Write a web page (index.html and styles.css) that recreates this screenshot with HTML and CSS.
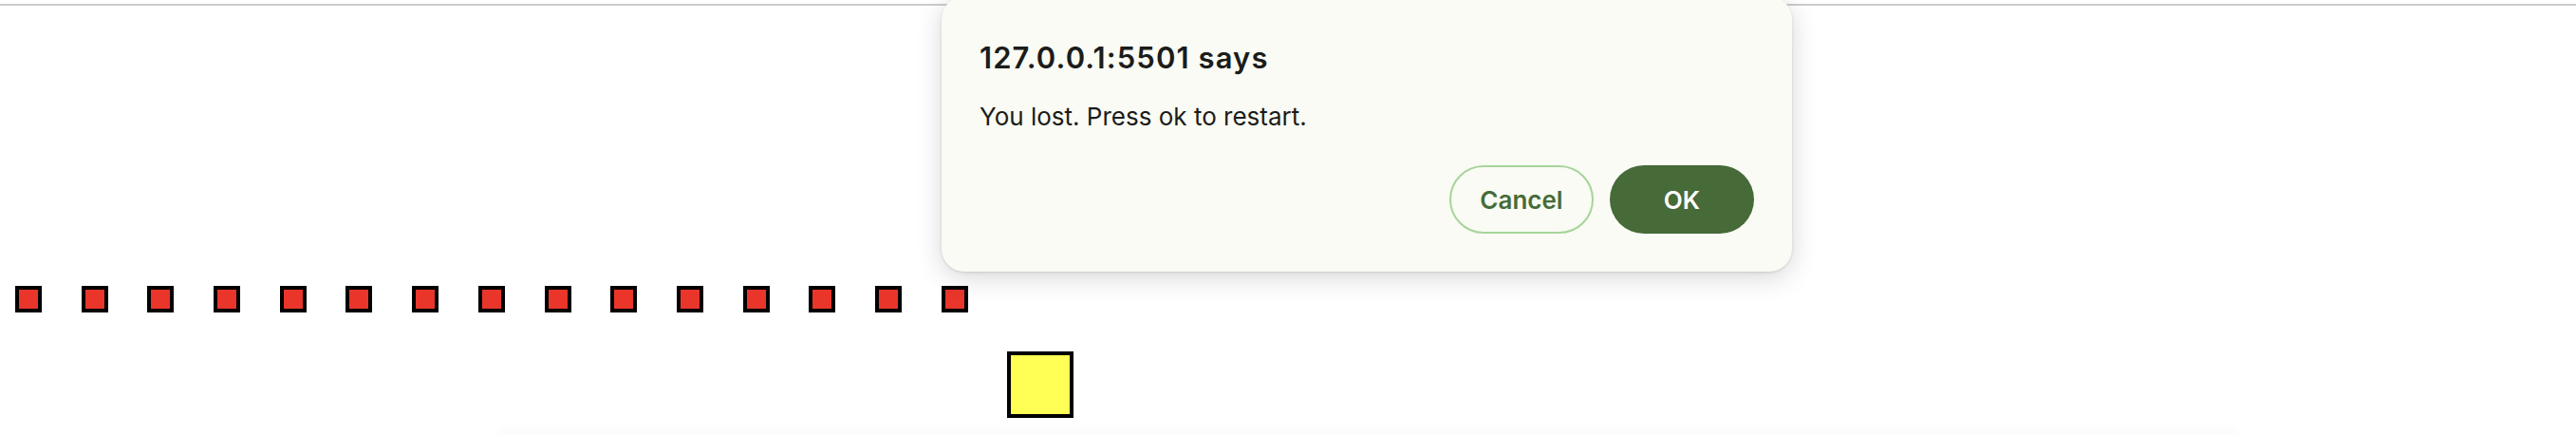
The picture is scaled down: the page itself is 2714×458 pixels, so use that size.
FILE: index.html
```html
<!DOCTYPE html>
<html>
<head>
<meta charset="utf-8">
<link rel="stylesheet" href="styles.css">
</head>
<body>
<div class="topline"></div>
<div class="board">
  <div class="snake">
    <div class="seg"></div><div class="seg"></div><div class="seg"></div><div class="seg"></div><div class="seg"></div>
    <div class="seg"></div><div class="seg"></div><div class="seg"></div><div class="seg"></div><div class="seg"></div>
    <div class="seg"></div><div class="seg"></div><div class="seg"></div><div class="seg"></div><div class="seg"></div>
  </div>
  <div class="food"></div>
</div>
<div class="bottomshade"></div>
<div class="dialog">
  <div class="title">127.0.0.1:5501 says</div>
  <div class="message">You lost. Press ok to restart.</div>
  <div class="actions">
    <button class="btn cancel">Cancel</button>
    <button class="btn ok">OK</button>
  </div>
</div>
</body>
</html>
```
FILE: styles.css
```css
html, body {
  margin: 0;
  padding: 0;
  background: #ffffff;
  width: 2714px;
  height: 458px;
  overflow: hidden;
  font-family: Inter, "Noto Sans", sans-serif;
}
.topline {
  margin-top: 4px;
  height: 2px;
  background: #cccccc;
}
.board {
  padding-top: 295px;
}
.snake {
  display: flex;
  gap: 41.7px;
  padding-left: 16px;
}
.seg {
  width: 20px;
  height: 20px;
  border: 4px solid #000;
  background: #e9352a;
  flex: none;
}
.food {
  margin-top: 41px;
  margin-left: 1061px;
  width: 62px;
  height: 62px;
  border: 4px solid #000;
  background: #ffff55;
}
.bottomshade {
  position: absolute;
  left: 525px;
  width: 1831px;
  top: 445px;
  height: 13px;
  background: linear-gradient(to bottom, rgba(0,0,0,0), rgba(0,0,0,0.025));
  border-radius: 40px 40px 0 0;
  filter: blur(3px);
}
.dialog {
  position: absolute;
  left: 992px;
  top: -4px;
  width: 816px;
  height: 243px;
  padding: 47px 40px 0 40px;
  background: #f9fbf4;
  border-radius: 24px;
  box-shadow: 0 6px 28px rgba(0,0,0,0.16), 0 1px 3px rgba(0,0,0,0.12);
  display: flex;
  flex-direction: column;
}
.title {
  font-size: 31px;
  line-height: 36px;
  font-weight: 600;
  letter-spacing: 1.1px;
  color: #1c1c1a;
}
.message {
  margin-top: 28px;
  font-size: 26px;
  line-height: 32px;
  font-weight: 400;
  color: #1c1c1a;
}
.actions {
  margin-top: 35px;
  display: flex;
  justify-content: flex-end;
  gap: 17px;
}
.btn {
  width: 152px;
  height: 72px;
  border-radius: 36px;
  font-family: Inter, "Noto Sans", sans-serif;
  font-size: 26px;
  font-weight: 600;
  box-sizing: border-box;
  cursor: pointer;
}
.cancel {
  background: transparent;
  border: 2px solid #a7d49a;
  color: #456b39;
}
.ok {
  background: #466a38;
  border: none;
  color: #ffffff;
}
```
